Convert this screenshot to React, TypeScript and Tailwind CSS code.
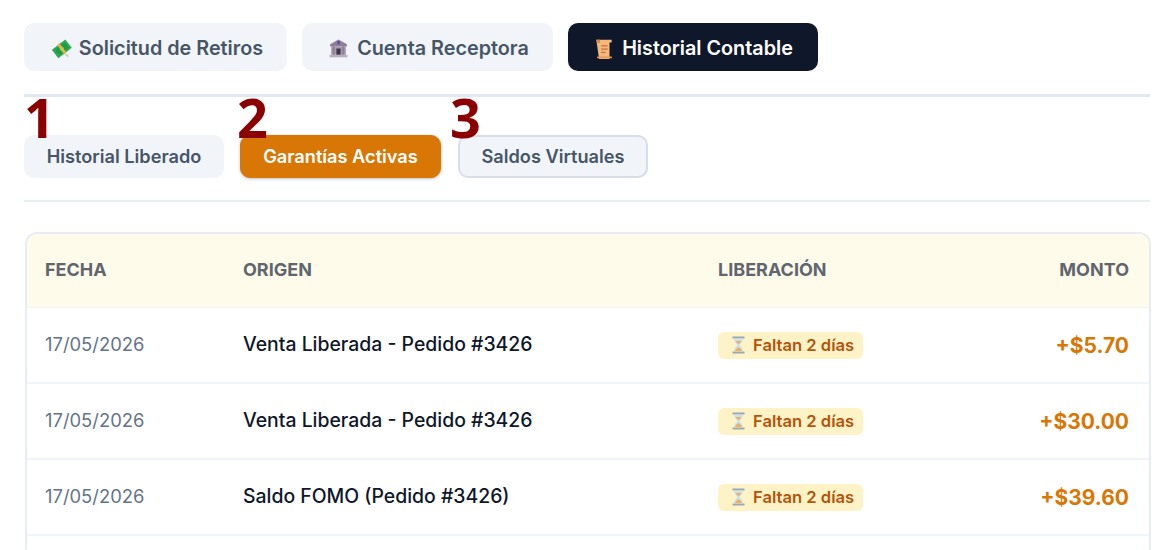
const font = { fontFamily: "Inter, 'Liberation Sans', sans-serif" };

function Money() {
  return (
    <svg width="20" height="20" viewBox="0 0 20 20">
      <g transform="rotate(-38 10 10)">
        <rect x="1.5" y="4.5" width="17" height="10.5" fill="#2fa84f" />
        <rect x="4" y="6.4" width="12" height="6.8" fill="#1f9a45" />
        <circle cx="10" cy="9.8" r="2.2" fill="#5fd07c" />
        <rect x="8.6" y="3.8" width="2.8" height="12" fill="#e0b84c" />
      </g>
      <path d="M13 16l3 2.5 1-2-3-2z" fill="#c9d1cc" />
    </svg>
  );
}

function Bank() {
  return (
    <svg width="21" height="21" viewBox="0 0 20 20">
      <path d="M10 1.5 18 6v2H2V6z" fill="#8d7f97" />
      <rect x="9" y="3" width="2" height="3" fill="#5b3fa0" />
      <rect x="3" y="8" width="14" height="8" fill="#a99bb0" />
      <rect x="4.5" y="8" width="2" height="8" fill="#8d7f97" />
      <rect x="13.5" y="8" width="2" height="8" fill="#8d7f97" />
      <rect x="8" y="10" width="4" height="6" fill="#3f3748" />
      <rect x="1.5" y="16" width="17" height="2.4" fill="#b8adbf" />
    </svg>
  );
}

function Scroll() {
  return (
    <svg width="22" height="22" viewBox="0 0 20 20">
      <path d="M3 1.5h14v2.6h-2V19H5.5z" fill="#f4b77c" />
      <path d="M3 1.5h3.4v3H3.6z" fill="#d98b4a" />
      <path d="M3.5 18.5H17.5l-.6-1.6H4z" fill="#e79c58" />
      <rect x="7.4" y="6.5" width="6" height="1.2" fill="#c9763a" />
      <rect x="7.4" y="9.5" width="6" height="1.2" fill="#c9763a" />
      <rect x="7.4" y="12.5" width="4" height="1.2" fill="#c9763a" />
    </svg>
  );
}

function Hourglass() {
  return (
    <svg width="15" height="18" viewBox="0 0 15 18">
      <rect x="1.5" y="0.5" width="12" height="2" fill="#9aa8b3" />
      <rect x="1.5" y="15.5" width="12" height="2" fill="#9aa8b3" />
      <path d="M3 2.5h9c0 3-2.2 5-3.6 6.5C9.8 10.5 12 12.5 12 15.5H3C3 12.5 5.2 10.5 6.6 9 5.2 7.5 3 5.5 3 2.5z" fill="#c6e3f2" />
      <path d="M4.5 5h6L7.5 8.5zM4 15.2c.4-2 2.2-3.4 3.5-4 1.3.6 3.1 2 3.5 4z" fill="#eeb05e" />
    </svg>
  );
}

const rows = [
  { fecha: "17/05/2026", origen: "Venta Liberada - Pedido #3426", monto: "+$5.70" },
  { fecha: "17/05/2026", origen: "Venta Liberada - Pedido #3426", monto: "+$30.00" },
  { fecha: "17/05/2026", origen: "Saldo FOMO (Pedido #3426)", monto: "+$39.60" },
];

const marks = [
  { n: "1", cls: "left-[24px]" },
  { n: "2", cls: "left-[237px]" },
  { n: "3", cls: "left-[450px]" },
];

export default function App() {
  return (
    <div style={font} className="relative h-[550px] w-[1170px] overflow-hidden bg-white pl-[24px] pr-[20px] pt-[23px]">
      <div className="flex gap-[15px] border-b-[3px] border-[#e2e8f0] pb-[23px]">
        <button className="flex h-[48px] w-[263px] items-center justify-center gap-[7px] rounded-[10px] bg-[#f1f5f9] pl-[4px] pt-[3px] text-[19.8px] font-semibold text-[#475569]">
          <Money />
          Solicitud de Retiros
        </button>
        <button className="flex h-[48px] w-[251px] items-center justify-center gap-[8px] rounded-[10px] bg-[#f1f5f9] pl-[2px] pt-[3px] text-[19.8px] font-semibold text-[#475569]">
          <Bank />
          Cuenta Receptora
        </button>
        <button className="flex h-[48px] w-[250px] items-center justify-center gap-[7px] rounded-[10px] bg-[#0f172a] pt-[3px] text-[19.8px] font-semibold text-white">
          <Scroll />
          Historial Contable
        </button>
      </div>

      <div className="flex gap-[16px] border-b-2 border-[#e9eef4] pb-[22px] pt-[38px]">
        <button className="h-[43px] w-[200px] rounded-[10px] bg-[#f1f5f9] text-[18.2px] font-semibold text-[#475569]">
          Historial Liberado
        </button>
        <button className="h-[43px] w-[201px] rounded-[10px] border border-[#d97706] bg-[#d97706] text-[18.2px] font-semibold text-white shadow-[0_1px_3px_rgba(0,0,0,0.25)]">
          Garantías Activas
        </button>
        <button className="ml-px h-[43px] w-[190px] rounded-[10px] border-2 border-[#d5deea] bg-[#f1f5f9] text-[18.2px] font-semibold text-[#475569]">
          Saldos Virtuales
        </button>
      </div>

      <div className="ml-px mt-[30px] h-[400px] w-[1126px] overflow-hidden rounded-t-[12px] border-2 border-[#e8ecf4]">
        <table className="w-full table-fixed border-collapse">
          <colgroup>
            <col className="w-[216px]" />
            <col className="w-[475px]" />
            <col className="w-[263px]" />
            <col />
          </colgroup>
          <thead>
            <tr className="h-[73px] border-b border-[#f1f5f9] bg-[#fffbeb] text-[18px]">
              <th className="pb-[2px] pl-[18px] text-left font-bold text-[#5f6670]">FECHA</th>
              <th className="pb-[2px] text-left font-bold text-[#5f6670]">ORIGEN</th>
              <th className="pb-[2px] text-left font-bold text-[#5f6670]">LIBERACIÓN</th>
              <th className="pb-[2px] pr-[20px] text-right font-bold text-[#5f6670]">MONTO</th>
            </tr>
          </thead>
          <tbody>
            {rows.map((r, i) => (
              <tr key={i} className="h-[76px] border-b-2 border-[#f1f5f9]">
                <td className="pl-[18px] text-[18.4px] text-[#64748b]">{r.fecha}</td>
                <td className="text-[19.4px] font-medium text-[#0f172a]">{r.origen}</td>
                <td className="pt-[2px]">
                  <span className="inline-flex h-[27px] items-center gap-[7px] rounded-[6px] bg-[#fef3c7] pl-[13px] pr-[9px] text-[16.6px] font-semibold text-[#b45309]">
                    <Hourglass />
                    Faltan 2 días
                  </span>
                </td>
                <td className="pr-[20px] pt-[2px] text-right text-[21px] font-bold text-[#d97706]">{r.monto}</td>
              </tr>
            ))}
          </tbody>
        </table>
      </div>

      {marks.map((m) => (
        <span
          key={m.n}
          style={{ fontFamily: "'Open Sans', sans-serif" }}
          className={`absolute top-[83px] text-[54px] font-bold leading-[68px] text-[#8b0000] ${m.cls}`}
        >
          {m.n}
        </span>
      ))}
    </div>
  );
}
